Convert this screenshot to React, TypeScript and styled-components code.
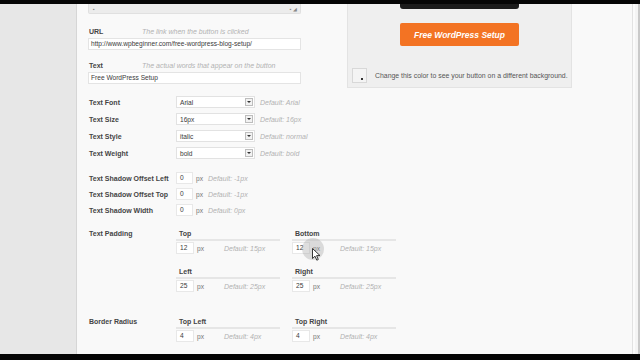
import React from 'react';
import styled, {createGlobalStyle} from 'styled-components';

const GlobalStyle = createGlobalStyle`
  html, body {
    margin: 0;
    padding: 0;
    background: #000;
  }
  body {
    font-family: 'Liberation Sans', Arial, sans-serif;
    width: 640px;
    height: 360px;
    overflow: hidden;
  }
`

const Screen = styled.div`
  display: flex;
  flex-direction: column;
  width: 640px;
  height: 360px;
  background: #000;
`

const BlackBar = styled.div<{ h: number }>`
  height: ${p => p.h}px;
  background: #050505;
  flex-shrink: 0;
`

const Main = styled.div`
  display: flex;
  height: 350px;
  flex-shrink: 0;
`

const Sidebar = styled.div`
  width: 76px;
  background: #e7e7e7;
  border-right: 1px solid #d6d6d6;
`

const Content = styled.div`
  position: relative;
  width: 556px;
  background: #f9f9f9;
  border-right: 1px solid #e2e2e2;
  padding-left: 11px;
  box-sizing: border-box;
`

const RightEdge = styled.div`
  flex: 1;
  background: #f4f4f4;
  border-left: 2px solid #fbfbfb;
  border-right: 2px solid #c9c9c9;
`

const TopArea = styled.div`
  display: flex;
  align-items: flex-start;
`

const LeftCol = styled.div`
  width: 213px;
`

const TextareaStub = styled.div`
  height: 9px;
  background: #ececec;
  border: 1px solid #e0e0e0;
  border-top: none;
  border-radius: 0 0 2px 2px;
  display: flex;
  justify-content: space-between;
  align-items: center;
  padding: 0 3px 0 4px;
  font-size: 5px;
  color: #888;
`

const Field = styled.div<{ top: number }>`
  margin-top: ${p => p.top}px;
`

const FieldHead = styled.div`
  display: flex;
  align-items: center;
  height: 10px;
  padding-left: 1px;
`

const Label = styled.div<{ w?: number }>`
  width: ${p => (p.w ? p.w + 'px' : 'auto')};
  font-size: 7px;
  font-weight: bold;
  color: #454545;
  white-space: nowrap;
  flex-shrink: 0;
`

const Hint = styled.span<{ ml?: number }>`
  margin-left: ${p => p.ml || 0}px;
  font-size: 7px;
  font-style: italic;
  color: #b2b2b2;
  white-space: nowrap;
`

const TextInput = styled.div`
  margin-top: 2px;
  height: 12px;
  background: #fff;
  border: 1px solid #e4e4e4;
  box-sizing: border-box;
  font-size: 6.6px;
  color: #3a3a3a;
  line-height: 10px;
  padding-left: 2px;
  white-space: nowrap;
  overflow: hidden;
`

const Panel = styled.div`
  margin-left: 46px;
  width: 225px;
  height: 84px;
  background: #efefef;
  border: 1px solid #e3e3e3;
  border-top: none;
  box-sizing: border-box;
  display: flex;
  flex-direction: column;
  align-items: center;
`

const DarkPreview = styled.div`
  width: 119px;
  height: 5px;
  background: #1b1b1b;
  border-radius: 0 0 3px 3px;
`

const OrangeButton = styled.div`
  margin-top: 14px;
  width: 119px;
  height: 23px;
  background: #f37323;
  border-radius: 2px;
  color: #fff;
  font-size: 8.5px;
  font-weight: bold;
  font-style: italic;
  display: flex;
  align-items: center;
  justify-content: center;
`

const SwatchRow = styled.div`
  align-self: stretch;
  margin-top: 22px;
  padding-left: 4px;
  display: flex;
  align-items: center;
  gap: 8px;
`

const Swatch = styled.div`
  position: relative;
  width: 15px;
  height: 15px;
  background: #f4f4f4;
  border: 1px solid #d8d8d8;
  box-sizing: border-box;

  &::after {
    content: '';
    position: absolute;
    right: 3px;
    bottom: 2px;
    width: 2px;
    height: 2px;
    background: #333;
  }
`

const SwatchText = styled.span`
  font-size: 6.9px;
  color: #555;
  white-space: nowrap;
`

const Rows = styled.div<{ top: number; gap: number }>`
  margin-top: ${p => p.top}px;
  display: flex;
  flex-direction: column;
  gap: ${p => p.gap}px;
`

const Row = styled.div`
  display: flex;
  align-items: center;
  padding-left: 1px;
`

const Select = styled.div`
  width: 79px;
  height: 12px;
  background: #fff;
  border: 1px solid #e2e2e2;
  box-sizing: border-box;
  display: flex;
  align-items: center;
  justify-content: space-between;
  padding: 0 1px 0 3px;
  font-size: 6.6px;
  color: #3a3a3a;
`

const Arrow = styled.div`
  width: 8px;
  height: 8px;
  border: 1px solid #bdbdbd;
  background: #f2f2f2;
  box-sizing: border-box;
  display: flex;
  align-items: center;
  justify-content: center;

  &::after {
    content: '';
    border-left: 2px solid transparent;
    border-right: 2px solid transparent;
    border-top: 2px solid #333;
  }
`

const SmallInput = styled.div<{ w?: number }>`
  width: ${p => p.w || 17}px;
  height: 12px;
  background: #fff;
  border: 1px solid #e8e8e8;
  box-sizing: border-box;
  font-size: 6.6px;
  color: #3a3a3a;
  line-height: 10px;
  padding-left: 3px;
  flex-shrink: 0;
`

const Unit = styled.span`
  margin-left: 3px;
  font-size: 6.6px;
  color: #777;
`

const Group = styled.div<{ top: number }>`
  margin-top: ${p => p.top}px;
  display: flex;
  padding-left: 1px;
`

const SubGrid = styled.div`
  display: grid;
  grid-template-columns: 104px 104px;
  column-gap: 12px;
  row-gap: 14px;
`

const SubCol = styled.div``

const SubHead = styled.div`
  font-size: 7px;
  font-weight: bold;
  color: #454545;
  padding: 0 0 1px 3px;
  border-bottom: 2px solid #e6e6e6;
  line-height: 8px;
`

const SubInputs = styled.div`
  margin-top: 1px;
  display: flex;
  align-items: center;
`

const Cursor = styled.div`
  position: absolute;
  left: 225px;
  top: 234px;
  width: 22px;
  height: 22px;
  border-radius: 50%;
  background: rgba(160, 160, 160, 0.35);

  svg {
    position: absolute;
    left: 10px;
    top: 10px;
  }
`

const selects = [
    {label: 'Text Font', value: 'Arial', def: 'Default: Arial'},
    {label: 'Text Size', value: '16px', def: 'Default: 16px'},
    {label: 'Text Style', value: 'italic', def: 'Default: normal'},
    {label: 'Text Weight', value: 'bold', def: 'Default: bold'},
]

const shadows = [
    {label: 'Text Shadow Offset Left', def: 'Default: -1px'},
    {label: 'Text Shadow Offset Top', def: 'Default: -1px'},
    {label: 'Text Shadow Width', def: 'Default: 0px'},
]

const SubField = ({title, value, def}: { title: string; value: string; def: string }) => (
    <SubCol>
        <SubHead>{title}</SubHead>
        <SubInputs>
            <SmallInput w={18}>{value}</SmallInput>
            <Unit>px</Unit>
            <Hint ml={20}>{def}</Hint>
        </SubInputs>
    </SubCol>
)

export default function App() {
    return (
        <Screen>
            <GlobalStyle/>
            <BlackBar h={4}/>
            <Main>
                <Sidebar/>
                <Content>
                    <TopArea>
                        <LeftCol>
                            <TextareaStub><span>▪</span><span>▪ ◢</span></TextareaStub>
                            <Field top={12}>
                                <FieldHead>
                                    <Label w={53}>URL</Label>
                                    <Hint>The link when the button is clicked</Hint>
                                </FieldHead>
                                <TextInput>http://www.wpbeginner.com/free-wordpress-blog-setup/</TextInput>
                            </Field>
                            <Field top={10}>
                                <FieldHead>
                                    <Label w={53}>Text</Label>
                                    <Hint>The actual words that appear on the button</Hint>
                                </FieldHead>
                                <TextInput>Free WordPress Setup</TextInput>
                            </Field>
                        </LeftCol>
                        <Panel>
                            <DarkPreview/>
                            <OrangeButton>Free WordPress Setup</OrangeButton>
                            <SwatchRow>
                                <Swatch/>
                                <SwatchText>Change this color to see your button on a different background.</SwatchText>
                            </SwatchRow>
                        </Panel>
                    </TopArea>

                    <Rows top={8} gap={5}>
                        {selects.map(s => (
                            <Row key={s.label}>
                                <Label w={87}>{s.label}</Label>
                                <Select>
                                    <span>{s.value}</span>
                                    <Arrow/>
                                </Select>
                                <Hint ml={5}>{s.def}</Hint>
                            </Row>
                        ))}
                    </Rows>

                    <Rows top={13} gap={4}>
                        {shadows.map(s => (
                            <Row key={s.label}>
                                <Label w={87}>{s.label}</Label>
                                <SmallInput>0</SmallInput>
                                <Unit>px</Unit>
                                <Hint ml={5}>{s.def}</Hint>
                            </Row>
                        ))}
                    </Rows>

                    <Group top={14}>
                        <Label w={87}>Text Padding</Label>
                        <SubGrid>
                            <SubField title="Top" value="12" def="Default: 15px"/>
                            <SubField title="Bottom" value="12" def="Default: 15px"/>
                            <SubField title="Left" value="25" def="Default: 25px"/>
                            <SubField title="Right" value="25" def="Default: 25px"/>
                        </SubGrid>
                    </Group>

                    <Group top={26}>
                        <Label w={87}>Border Radius</Label>
                        <SubGrid>
                            <SubField title="Top Left" value="4" def="Default: 4px"/>
                            <SubField title="Top Right" value="4" def="Default: 4px"/>
                        </SubGrid>
                    </Group>

                    <Cursor>
                        <svg width="9" height="13" viewBox="0 0 9 13">
                            <path d="M0.5 0.5 L0.5 10.5 L3 8.2 L4.8 12.2 L6.3 11.5 L4.6 7.6 L8 7.6 Z"
                                  fill="#fff" stroke="#222" strokeWidth="0.9" strokeLinejoin="round"/>
                        </svg>
                    </Cursor>
                </Content>
                <RightEdge/>
            </Main>
            <BlackBar h={6}/>
        </Screen>
    );
}
